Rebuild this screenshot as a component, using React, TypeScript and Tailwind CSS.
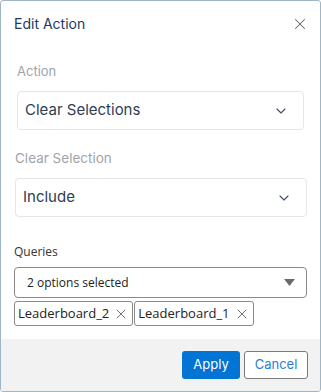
import { ChevronDown, X } from 'lucide-react';

const inter = { fontFamily: 'Inter, "Noto Sans", sans-serif' };
const openSans = { fontFamily: '"Open Sans", "Noto Sans", sans-serif' };

function SelectBox({ value }: { value: string }) {
  return (
    <div className="flex h-[39px] items-center justify-between rounded-[4px] border border-[#e3e6ea] bg-white pl-[7px] pr-[14px]">
      <span className="text-[15px] text-[#2f3d52]">{value}</span>
      <ChevronDown size={16} strokeWidth={1.6} className="text-[#3f5068]" />
    </div>
  );
}

function Chip({ label }: { label: string }) {
  return (
    <div className="flex h-[25px] items-center gap-[4px] rounded-[3px] border border-[#8a8a8a] bg-white pl-[3px] pr-[3px] text-[13px] text-[#222]">
      <span>{label}</span>
      <X size={16} strokeWidth={1.25} className="text-[#555]" />
    </div>
  );
}

export default function App() {
  return (
    <div className="flex h-[392px] w-[321px] flex-col overflow-hidden rounded-[3px] border border-[#9fb6c6] bg-white" style={inter}>
      {/* Header */}
      <div className="flex h-[45px] items-center justify-between pl-[13px] pr-[11px]">
        <h1 className="text-[14px] text-[#1c3a63]">Edit Action</h1>
        <X size={18} strokeWidth={1.4} className="text-[#666]" />
      </div>

      {/* Body */}
      <div className="flex flex-1 flex-col">
        <div className="flex flex-col px-[16px] pt-[15px]">
          <label className="text-[13px] leading-[20px] text-[#a0a4aa]">Action</label>
          <div className="mt-[10px]">
            <SelectBox value="Clear Selections" />
          </div>
        </div>
        <div className="flex flex-col pl-[14px] pr-[13px] pt-[18px]">
          <label className="text-[13.5px] leading-[20px] text-[#a0a4aa]">Clear Selection</label>
          <div className="mt-[10px]">
            <SelectBox value="Include" />
          </div>
        </div>
        <div className="flex flex-col pl-[13px] pr-[13px] pt-[26px]" style={openSans}>
          <label className="text-[12px] leading-[18px] text-[#333]">Queries</label>
          <div className="mt-[6px] flex h-[31px] items-center justify-between rounded-[4px] border border-[#8a8a8a] bg-white pl-[12px] pr-[10px]">
            <span className="text-[12px] text-[#222]">2 options selected</span>
            <svg width="11" height="7" viewBox="0 0 11 7" className="mr-[1px]">
              <path d="M0 0 L11 0 L5.5 7 Z" fill="#6b6b6b" />
            </svg>
          </div>
          <div className="mt-[3px] flex gap-[1px]">
            <Chip label="Leaderboard_2" />
            <Chip label="Leaderboard_1" />
          </div>
        </div>
      </div>

      {/* Footer */}
      <div className="flex h-[52px] items-center justify-end gap-[4px] bg-[#f2f2f2] pr-[12px]">
        <button type="button" className="h-[28px] w-[58px] rounded-[3px] bg-[#0274d3] text-[13px] text-white">
          Apply
        </button>
        <button type="button" className="h-[28px] w-[64px] rounded-[3px] border border-[#7a7a7a] bg-white text-[13px] text-[#2a7fd0]">
          Cancel
        </button>
      </div>
    </div>
  );
}
